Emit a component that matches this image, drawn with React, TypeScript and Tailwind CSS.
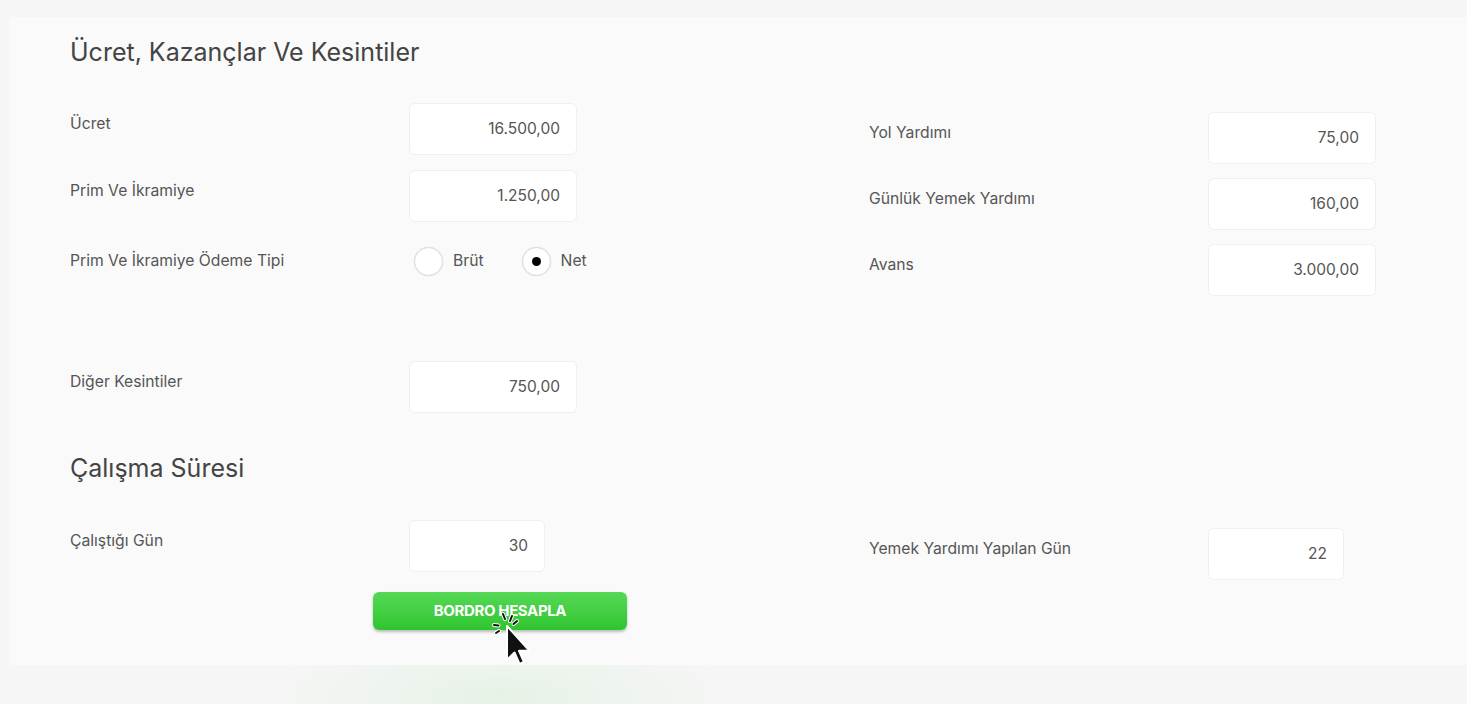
import React from "react";

interface FieldProps {
  label: string;
  value: string;
  narrow?: boolean;
}

function Field({ label, value, narrow }: FieldProps) {
  return (
    <div className="flex items-start">
      <span className="w-[339px] pt-[11px] text-[15.7px] leading-5 text-[#555]">{label}</span>
      <div
        className={`flex h-[52px] items-center justify-end rounded-md border border-[#efefef] bg-white pr-4 text-[15.5px] text-[#555] ${
          narrow ? "w-[136px]" : "w-[168px]"
        }`}
      >
        {value}
      </div>
    </div>
  );
}

function Radio({ label, checked }: { label: string; checked?: boolean }) {
  return (
    <div className="flex items-center gap-[10px]">
      <div className="flex h-[29px] w-[29px] items-center justify-center rounded-full border border-[#dcdcdc] bg-white shadow-[0_0_1px_rgba(0,0,0,0.15)]">
        {checked && <div className="h-[9px] w-[9px] rounded-full bg-black" />}
      </div>
      <span className="text-[15.7px] text-[#555]">{label}</span>
    </div>
  );
}

function Cursor() {
  return (
    <svg
      className="pointer-events-none absolute left-[118px] top-[20px]"
      width="42"
      height="56"
      viewBox="0 0 42 56"
    >
      <g stroke="#fff" strokeWidth="4" strokeLinecap="round">
        <line x1="12" y1="2" x2="14" y2="7" />
        <line x1="21" y1="4" x2="19" y2="9" />
        <line x1="26" y1="9" x2="22.5" y2="12" />
        <line x1="3" y1="13" x2="7.5" y2="13.5" />
        <line x1="5" y1="21" x2="8" y2="19" />
      </g>
      <g stroke="#111" strokeWidth="2" strokeLinecap="round">
        <line x1="12" y1="2" x2="14" y2="7" />
        <line x1="21" y1="4" x2="19" y2="9" />
        <line x1="26" y1="9" x2="22.5" y2="12" />
        <line x1="3" y1="13" x2="7.5" y2="13.5" />
        <line x1="5" y1="21" x2="8" y2="19" />
      </g>
      <path
        d="M16 14 L16 48 L23.5 40.5 L28.5 52 L33 50 L28 38.8 L38.5 38.8 Z"
        fill="#111"
        stroke="#fff"
        strokeWidth="2"
        strokeLinejoin="round"
      />
    </svg>
  );
}

export default function App() {
  return (
    <div
      className="h-[704px] w-[1467px] overflow-hidden bg-[#f6f6f6] pt-[17px]"
      style={{ fontFamily: "Inter, 'Liberation Sans', sans-serif" }}
    >
      <div className="ml-[10px] h-[648px] bg-[#fafafa] pl-[60px] pt-[19px]">
        <h2 className="h-8 text-[25px] leading-8 text-[#444]">Ücret, Kazançlar Ve Kesintiler</h2>

        <div className="mt-[35px] grid grid-cols-[799px_1fr]">
          <div className="flex flex-col gap-[15px]">
            <Field label="Ücret" value="16.500,00" />
            <Field label="Prim Ve İkramiye" value="1.250,00" />
            <div className="flex h-[48px] items-center">
              <span className="w-[344px] text-[15.7px] text-[#555]">Prim Ve İkramiye Ödeme Tipi</span>
              <div className="flex items-center gap-[38px]">
                <Radio label="Brüt" />
                <Radio label="Net" checked />
              </div>
            </div>
            <div className="mt-[61px]">
              <Field label="Diğer Kesintiler" value="750,00" />
            </div>
          </div>
          <div className="flex flex-col gap-[14px] pt-[9px]">
            <Field label="Yol Yardımı" value="75,00" />
            <Field label="Günlük Yemek Yardımı" value="160,00" />
            <Field label="Avans" value="3.000,00" />
          </div>
        </div>

        <h2 className="mt-[39px] h-8 text-[25px] leading-8 text-[#444]">Çalışma Süresi</h2>

        <div className="mt-[36px] grid grid-cols-[799px_1fr]">
          <div className="flex flex-col">
            <Field label="Çalıştığı Gün" value="30" narrow />
            <div className="relative ml-[303px] mt-[20px] w-[254px]">
              <button className="flex h-[38px] w-[254px] items-center justify-center rounded-md bg-gradient-to-b from-[#55d955] to-[#2ec52e] text-[15px] font-bold tracking-tight text-white shadow-[0_2px_3px_rgba(0,0,0,0.25)]">
                BORDRO HESAPLA
              </button>
              <Cursor />
            </div>
          </div>
          <div className="pt-[8px]">
            <Field label="Yemek Yardımı Yapılan Gün" value="22" narrow />
          </div>
        </div>
      </div>
      <div className="h-[39px] bg-[radial-gradient(ellipse_240px_60px_at_500px_30px,#e6f2e6,transparent)]" />
    </div>
  );
}
